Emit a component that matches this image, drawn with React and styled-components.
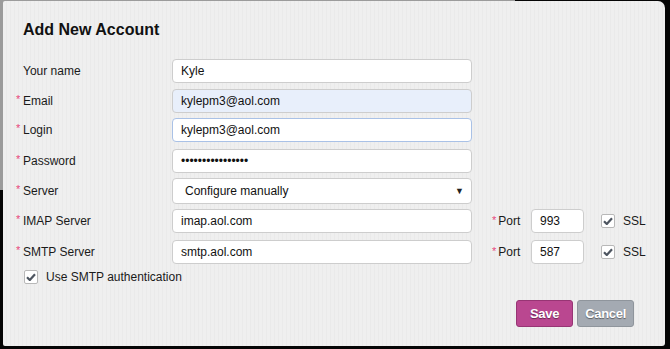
import React from 'react';
import styled, { createGlobalStyle } from 'styled-components';

const GlobalStyle = createGlobalStyle`
    html, body {
        margin: 0;
        padding: 0;
        width: 670px;
        height: 349px;
        overflow: hidden;
    }
    body {
        background:
            linear-gradient(#9b9b9b, #9b9b9b) 0 0 / 515px 190px no-repeat,
            #050505;
        font-family: "Liberation Sans", Arial, sans-serif;
    }
`;

const Stage = styled.div`
    padding: 1px 5px 3px 3px;
`;

const Dialog = styled.div`
    width: 662px;
    height: 345px;
    box-sizing: border-box;
    border-radius: 2px 7px 3px 2px;
    background: repeating-linear-gradient(90deg, #efefef 0, #efefef 3px, #eaeaea 3px, #eaeaea 4px);
    padding: 19px 20px 0 10px;
    display: flex;
    flex-direction: column;
`;

const Title = styled.h2`
    margin: 0 0 19px 10px;
    font-size: 16px;
    font-weight: bold;
    color: #111;
    line-height: 20px;
`;

const Form = styled.div`
    display: flex;
    flex-direction: column;
    gap: 6px;
`;

const Row = styled.div`
    display: flex;
    align-items: center;
    height: ${p => p.$h || 24}px;
    margin-top: ${p => p.$mt || 0}px;
`;

const Label = styled.div`
    width: 159px;
    flex-shrink: 0;
    display: flex;
    align-items: center;
    font-size: 12px;
    color: #1a1a1a;
`;

const Star = styled.span`
    width: 10px;
    color: #e8467c;
    font-size: 11px;
    text-align: left;
    padding-left: 3px;
    box-sizing: border-box;
    align-self: flex-start;
    margin-top: -1px;
`;

const Input = styled.div`
    width: ${p => p.$w || 300}px;
    height: ${p => p.$h || 24}px;
    flex-shrink: 0;
    box-sizing: border-box;
    border: 1px solid ${p => (p.$focus ? '#a9c1e6' : '#cdcdcd')};
    border-radius: 4px;
    background: ${p => (p.$auto ? '#e8effb' : '#fff')};
    padding: 0 8px 0 ${p => p.$pl || 8}px;
    display: flex;
    align-items: center;
    justify-content: space-between;
    font-size: 12px;
    color: #111;
`;

const Dots = styled.span`
    font-size: 12px;
    letter-spacing: 0;
`;

const Arrow = styled.span`
    font-size: 9px;
    color: #222;
    margin-right: -1px;
`;

const PortGroup = styled.div`
    display: flex;
    align-items: center;
    margin-left: 20px;
    font-size: 12px;
    color: #1a1a1a;
`;

const PortLabel = styled.span`
    width: 39px;
    display: flex;
    align-items: center;
`;

const SmallStar = styled.span`
    color: #e8467c;
    font-size: 11px;
    margin-right: 2px;
    align-self: flex-start;
`;

const Check = styled.span`
    width: 14px;
    height: 14px;
    box-sizing: border-box;
    border: 1px solid #b8b8b8;
    border-radius: 2px;
    background: #fff;
    display: inline-flex;
    align-items: center;
    justify-content: center;
    margin-right: ${p => p.$mr || 8}px;
    margin-left: ${p => p.$ml || 0}px;
`;

const CheckLabel = styled.label`
    display: flex;
    align-items: center;
    font-size: 12px;
    color: #1a1a1a;
`;

const Footer = styled.div`
    display: flex;
    justify-content: flex-end;
    gap: 4px;
    margin-top: 15px;
    margin-right: 11px;
`;

const Button = styled.button`
    height: 27px;
    padding: 0 ${p => p.$px || 12}px;
    border-radius: 3px;
    border: 1px solid ${p => (p.$primary ? '#973574' : '#8f959c')};
    background: ${p => (p.$primary ? '#ba4790' : '#a4aab2')};
    color: #fff;
    font-family: "Liberation Sans", Arial, sans-serif;
    font-weight: bold;
    font-size: 13px;
    letter-spacing: -0.3px;
    text-shadow: 0 1px 1px rgba(0, 0, 0, 0.45);
`;

function Tick() {
    return (
        <svg width="10" height="8" viewBox="0 0 10 8">
            <path d="M1 4.2 L3.8 7 L9 1.2" fill="none" stroke="#4d5560" strokeWidth="2.2" />
        </svg>
    );
}

function Field({ label, required, mt, children }) {
    return (
        <Row $mt={mt}>
            <Label>
                <Star>{required ? '*' : ''}</Star>
                {label}
            </Label>
            {children}
        </Row>
    );
}

function Port({ value }) {
    return (
        <PortGroup>
            <PortLabel>
                <SmallStar>*</SmallStar>Port
            </PortLabel>
            <Input $w={53}>{value}</Input>
            <Check $ml={17}><Tick /></Check>
            SSL
        </PortGroup>
    );
}

export default function App() {
    return (
        <>
            <GlobalStyle />
            <Stage>
                <Dialog>
                    <Title>Add New Account</Title>
                    <Form>
                        <Field label="Your name">
                            <Input>Kyle</Input>
                        </Field>
                        <Field label="Email" required>
                            <Input $auto>kylepm3@aol.com</Input>
                        </Field>
                        <Field label="Login" required mt={-1}>
                            <Input $focus>kylepm3@aol.com</Input>
                        </Field>
                        <Field label="Password" required mt={1}>
                            <Input><Dots>••••••••••••••••</Dots></Input>
                        </Field>
                        <Field label="Server" required>
                            <Input $h={26} $pl={12}>
                                Configure manually
                                <Arrow>▼</Arrow>
                            </Input>
                        </Field>
                        <Field label="IMAP Server" required>
                            <Input>imap.aol.com</Input>
                            <Port value="993" />
                        </Field>
                        <Field label="SMTP Server" required mt={1}>
                            <Input>smtp.aol.com</Input>
                            <Port value="587" />
                        </Field>
                        <Row $h={16} $mt={-1}>
                            <CheckLabel>
                                <Check $ml={11}><Tick /></Check>
                                Use SMTP authentication
                            </CheckLabel>
                        </Row>
                    </Form>
                    <Footer>
                        <Button $primary $px={13}>Save</Button>
                        <Button $px={7}>Cancel</Button>
                    </Footer>
                </Dialog>
            </Stage>
        </>
    );
}
